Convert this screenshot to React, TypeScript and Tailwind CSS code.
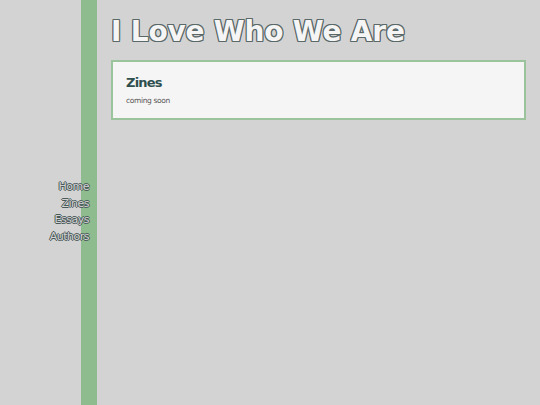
import React from 'react';

const links = ['Home', 'Zines', 'Essays', 'Authors'];

const App = () => {
  return (
    <div className="flex min-h-[405px] w-full bg-[#d3d3d3] font-['DejaVu_Sans',Verdana,sans-serif]">
      {/* sidebar */}
      <div className="w-[97px] shrink-0 border-r-[16px] border-[#8fbc8f]">
        <nav className="-mr-2 mt-[179px] flex flex-col items-end text-[11px] leading-[16.5px] tracking-[-0.5px] text-[#d3d3d3] [text-shadow:-1px_0_#4a5a5a,1px_0_#4a5a5a,0_-1px_#4a5a5a,0_1px_#4a5a5a]">
          {links.map((link) => (
            <a key={link} href="#" className="block">
              {link}
            </a>
          ))}
        </nav>
      </div>

      {/* main */}
      <div className="flex-1 px-[14px]">
        <h1 className="mt-[15px] text-[28px] font-bold leading-[34px] tracking-[-0.2px] text-[#f5f5f5] [text-shadow:-1px_0_#5a6868,1px_0_#5a6868,0_-1px_#5a6868,0_1px_#5a6868,1px_1px_#5a6868,-1px_-1px_#5a6868,1px_-1px_#5a6868,-1px_1px_#5a6868]">
          I Love Who We Are
        </h1>
        <div className="mt-[11px] h-[60px] border-2 border-[#9cc49c] bg-[#f5f5f5] px-[13px] pt-[12px]">
          <h2 className="text-[13px] font-bold leading-[17px] tracking-[-0.8px] text-[#2f4f4f]">Zines</h2>
          <p className="mt-[5px] text-[7.5px] leading-[10px] tracking-[-0.35px] text-[#555]">coming soon</p>
        </div>
      </div>
    </div>
  );
};

export default App;
